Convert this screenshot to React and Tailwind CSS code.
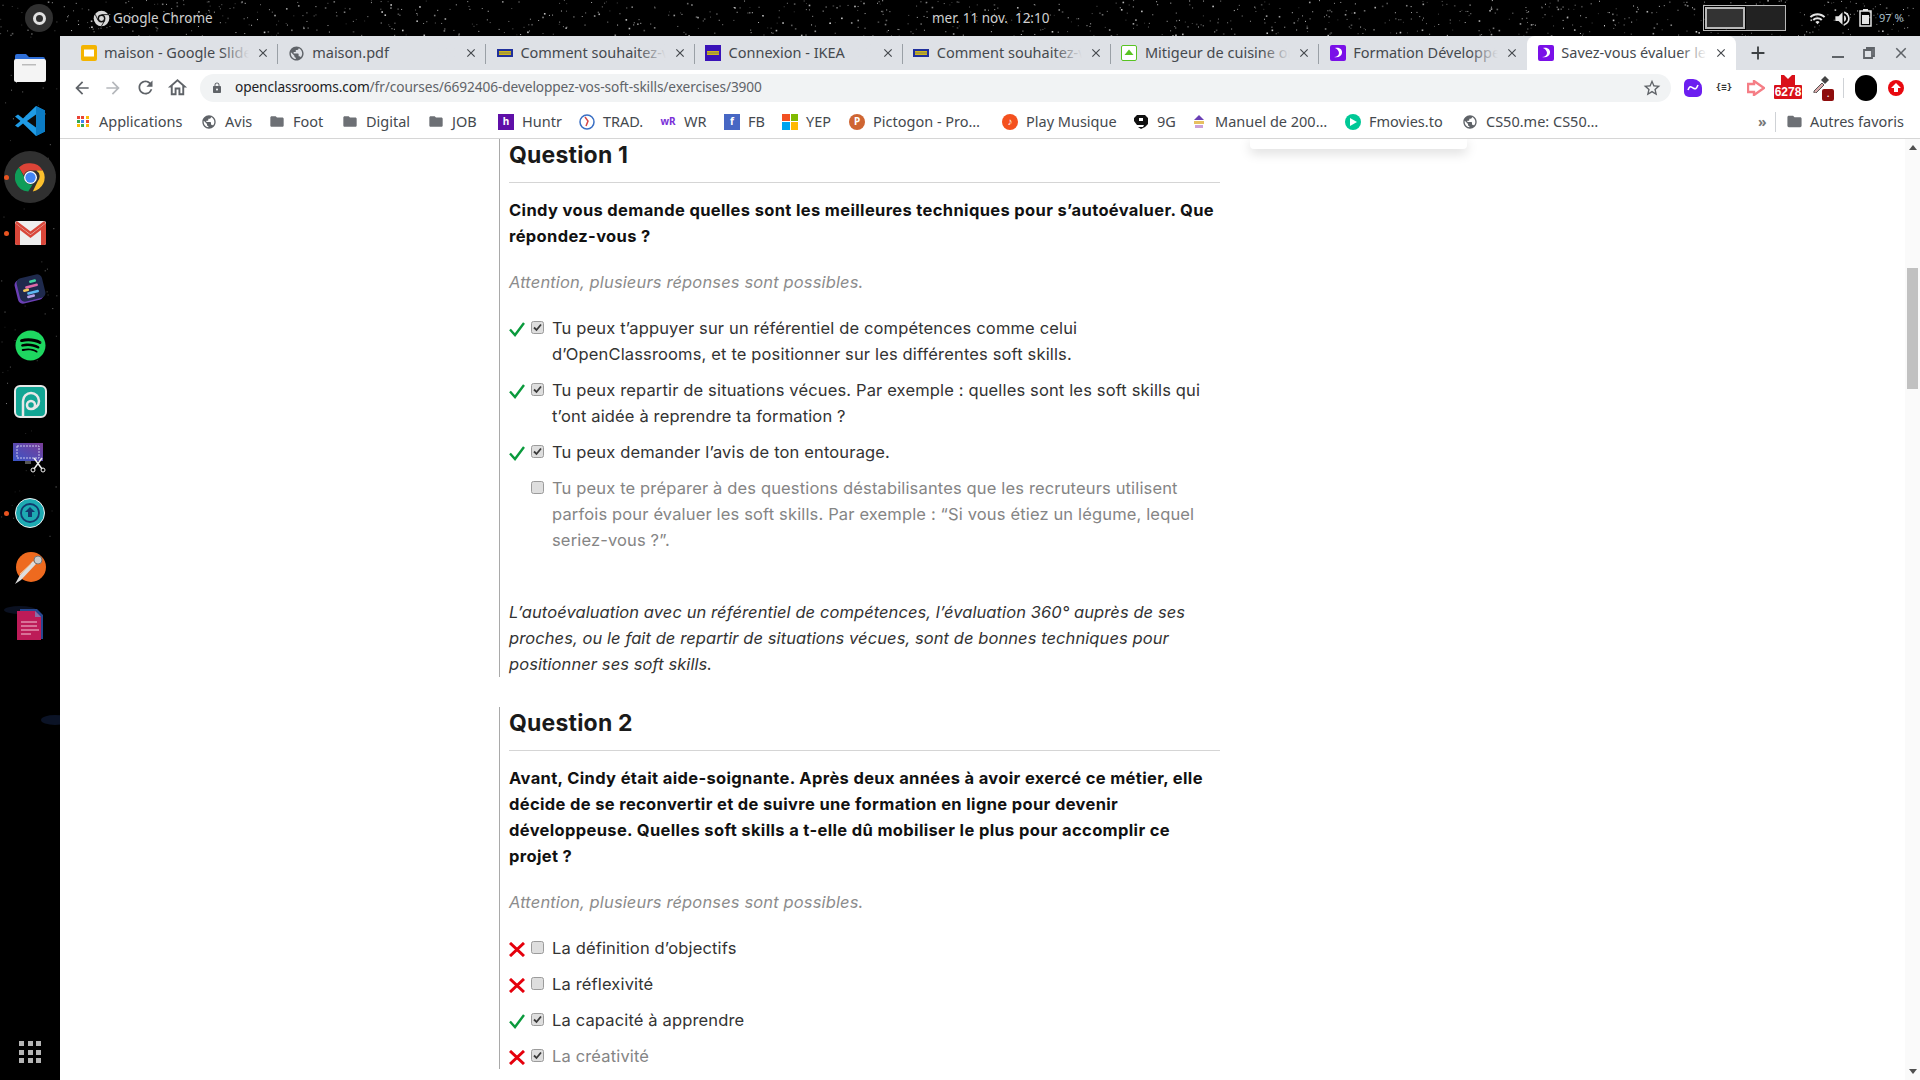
import * as React from 'react';
import { MdArrowBack, MdArrowForward, MdRefresh, MdOutlineHome, MdLock, MdStarBorder, MdFolder, MdPublic, MdClose, MdAdd, MdWifi, MdVolumeUp } from 'react-icons/md';
import { FaSpotify } from 'react-icons/fa';

const UI_FONT = "font-['Noto_Sans',sans-serif]";
const PAGE_FONT = "font-['Inter',sans-serif]";

// wallpaper specks, denser along the top
const makeStars = () => {
  let seed = 7;
  const rand = () => {
    seed = (seed * 16807) % 2147483647;
    return seed / 2147483647;
  };
  const stars = [];
  for (let i = 0; i < 900; i++) {
    stars.push({ x: rand() * 1920, y: rand() * 36, o: 0.2 + rand() * 0.6, s: rand() > 0.8 ? 1.6 : 1 });
  }
  for (let i = 0; i < 70; i++) {
    stars.push({ x: rand() * 60, y: 36 + rand() * 500, o: 0.1 + rand() * 0.4, s: 1 });
  }
  return stars;
};

const Wallpaper = () => (
  <svg className="absolute inset-0 w-full h-full" viewBox="0 0 1920 1080">
    {makeStars().map((s, i) => (
      <rect key={i} x={s.x} y={s.y} width={s.s} height={s.s} fill="#fff" opacity={s.o} />
    ))}
    <ellipse cx="55" cy="720" rx="14" ry="5" fill="#13203f" opacity="0.6" />
    <ellipse cx="20" cy="610" rx="16" ry="4" fill="#101b35" opacity="0.6" />
  </svg>
);

const ChromeLogo = ({ size = 16, center = '#4285f4' }) => (
  <svg width={size} height={size} viewBox="0 0 48 48">
    <path d="M24 2a22 22 0 0 1 19 11H24a11 11 0 0 0-10.500 7.500L6 8.500A22 22 0 0 1 24 2z" fill="#db4437" />
    <path d="M43 13a22 22 0 0 1-15.500 32.700L35 30a11 11 0 0 0-2-17z" fill="#fbc02d" />
    <path d="M6 8.500L14 23a11 11 0 0 0 13.500 11.500l-7 11.200A22 22 0 0 1 6 8.500z" fill="#0f9d58" />
    <circle cx="24" cy="24" r="10" fill="#fff" />
    <circle cx="24" cy="24" r="8" fill={center} />
  </svg>
);

const MonoChrome = () => (
  <svg width="17" height="17" viewBox="0 0 48 48">
    <circle cx="24" cy="24" r="22" fill="#d8d8d8" />
    <circle cx="24" cy="24" r="11" fill="#111" />
    <circle cx="24" cy="24" r="7" fill="#d8d8d8" />
    <path d="M24 13h19M14.500 29.500L6 12M33 30l-9 15" stroke="#111" strokeWidth="2.500" />
  </svg>
);

const FilesIcon = () => (
  <svg width="34" height="34" viewBox="0 0 34 34">
    <path d="M2 6a2 2 0 0 1 2-2h9l3 3h14a2 2 0 0 1 2 2v6H2z" fill="#2f6fd8" />
    <rect x="1" y="9" width="32" height="23" rx="2" fill="#f4f4f4" />
    <rect x="9" y="14" width="14" height="1.500" fill="#bbb" />
  </svg>
);

const VscodeIcon = () => (
  <svg width="32" height="32" viewBox="0 0 32 32">
    <path d="M22 1l9 4.500v21L22 31 9 18.500l-5 4-3-2L6.500 16 1 11.500l3-2 5 4z" fill="#1f9be6" />
    <path d="M22 1l9 4.500v21L22 31z" fill="#0b7bc4" />
    <path d="M22 9.500v13L13 16z" fill="#0c0c0c" />
  </svg>
);

const GmailIcon = () => (
  <svg width="31" height="24" viewBox="0 0 31 24">
    <rect width="31" height="24" rx="2" fill="#eeeeee" />
    <path d="M0 2l15.500 12L31 2v20a2 2 0 0 1-2 2h-3V9L15.500 17 5 9v15H2a2 2 0 0 1-2-2z" fill="#d9473a" />
    <path d="M1 1l14.500 11L30 1" fill="none" stroke="#d9473a" strokeWidth="2.500" />
  </svg>
);

const SlackLikeIcon = () => (
  <svg width="32" height="32" viewBox="0 0 32 32">
    <rect x="2" y="5" width="26" height="24" rx="5" fill="#6b3fb5" transform="rotate(-14 15 17)" />
    <rect x="4" y="3" width="26" height="24" rx="5" fill="#1f2a4d" transform="rotate(-14 17 15)" />
    <rect x="15" y="7" width="7" height="2.500" rx="1" fill="#41d8a0" transform="rotate(-14 18 8)" />
    <rect x="11" y="12" width="13" height="2.500" rx="1" fill="#e06aa8" transform="rotate(-14 17 13)" />
    <rect x="9" y="16" width="6" height="2.500" rx="1" fill="#f2c95c" transform="rotate(-14 12 17)" />
    <rect x="13" y="18" width="12" height="2.500" rx="1" fill="#5cb8f2" transform="rotate(-14 19 19)" />
    <rect x="13" y="22" width="8" height="2.500" rx="1" fill="#b8a0e8" transform="rotate(-14 17 23)" />
  </svg>
);

const PixelIcon = () => (
  <svg width="33" height="33" viewBox="0 0 33 33">
    <rect x="1" y="1" width="31" height="31" rx="5" fill="#12a594" stroke="#e8e8e8" strokeWidth="2" />
    <path d="M9 31V16a8 8 0 1 1 8 8c-3 0-4-2-4-4a4 4 0 1 1 4 4" fill="none" stroke="#e8e8e8" strokeWidth="2.500" />
  </svg>
);

const ScreenshotIcon = () => (
  <svg width="36" height="32" viewBox="0 0 36 32">
    <defs>
      <linearGradient id="shot" x1="0" y1="1" x2="1" y2="0">
        <stop offset="0" stopColor="#3a56c8" />
        <stop offset="1" stopColor="#7a3d96" />
      </linearGradient>
    </defs>
    <rect x="1" y="2" width="30" height="18" fill="url(#shot)" />
    <rect x="5" y="5" width="22" height="12" fill="none" stroke="#c9c9ee" strokeDasharray="2 1" />
    <rect x="13" y="20" width="6" height="3" fill="#555" />
    <path d="M22 17l8 11M30 17l-8 11" stroke="#eee" strokeWidth="1.500" />
    <circle cx="21" cy="29" r="2" fill="none" stroke="#eee" />
    <circle cx="31" cy="29" r="2" fill="none" stroke="#eee" />
  </svg>
);

const UploadCircleIcon = () => (
  <svg width="30" height="30" viewBox="0 0 30 30">
    <circle cx="15" cy="15" r="14.500" fill="#1eaab2" stroke="#f0f0f0" />
    <circle cx="15" cy="15" r="9" fill="none" stroke="#123a6e" strokeWidth="1.800" />
    <path d="M15 9l5 5h-3v5h-4v-5h-3z" fill="#123a6e" />
  </svg>
);

const PenIcon = () => (
  <svg width="32" height="34" viewBox="0 0 32 34">
    <circle cx="17" cy="15" r="15" fill="#ee6a1f" />
    <path d="M1 32l6-4 15-16-3-3L6 23z" fill="#ddd" />
    <path d="M6 22l11-10" stroke="#f5c89a" />
    <circle cx="24" cy="8" r="4" fill="#ccc" stroke="#777" />
  </svg>
);

const DocIcon = () => (
  <svg width="28" height="32" viewBox="0 0 28 32">
    <path d="M4 0h17l6 6v24H4z" fill="#27478f" />
    <path d="M1 2h18l6 6v23H1z" fill="#bd1b58" />
    <path d="M19 2l6 6h-6z" fill="#8a6fa8" />
    <path d="M5 13h16M5 17h16M5 21h18M5 25h10" stroke="#f3c7d6" strokeWidth="1.200" />
  </svg>
);

const Dock = () => {
  const slotClass = 'flex items-center justify-center relative h-[56px] w-full shrink-0';
  const dotClass = 'absolute left-[4px] top-[26px] w-[5px] h-[5px] rounded-full bg-[#e95420]';
  return (
    <div className="relative w-[60px] shrink-0 flex flex-col items-center pt-[3px] pb-[17px]">
      <div className={slotClass}><FilesIcon /></div>
      <div className={`${slotClass} mt-[-2px]`}><VscodeIcon /></div>
      <div className={slotClass}>
        <span className="w-[52px] h-[52px] rounded-full bg-[#303030] flex items-center justify-center">
          <ChromeLogo size={31} />
        </span>
        <span className={dotClass} />
      </div>
      <div className={slotClass}>
        <GmailIcon />
        <span className={dotClass} />
      </div>
      <div className={slotClass}><SlackLikeIcon /></div>
      <div className={slotClass}><FaSpotify size={31} color="#1ed760" /></div>
      <div className={slotClass}><PixelIcon /></div>
      <div className={slotClass}><ScreenshotIcon /></div>
      <div className={slotClass}>
        <UploadCircleIcon />
        <span className={dotClass} />
      </div>
      <div className={slotClass}><PenIcon /></div>
      <div className={slotClass}><DocIcon /></div>
      <div className="mt-auto grid grid-cols-3 gap-[3.500px]">
        {[...Array(9)].map((_, i) => (
          <span key={i} className="w-[5px] h-[5px] bg-[#b5b5b5]" />
        ))}
      </div>
    </div>
  );
};

const TopBar = () => (
  <div className={`relative h-[36px] shrink-0 flex items-center text-[13.500px] text-[#d0d0d0] ${UI_FONT}`}>
    <div className="ml-[25px] w-[28px] h-[28px] rounded-full bg-[#303030] flex items-center justify-center">
      <span className="w-[13px] h-[13px] rounded-full border-[3px] border-[#e0e0e0]" />
    </div>
    <div className="ml-[40px] flex items-center gap-[3px] w-[130px]">
      <MonoChrome />
      <span>Google Chrome</span>
    </div>
    <span className="ml-[709px] w-[116px] text-center whitespace-nowrap">mer. 11 nov.&nbsp; 12:10</span>
    <div className="ml-[655px] w-[83px] h-[26px] border border-[#b8b8b8] flex">
      <span className="w-[40px] m-[1px] bg-[#333] border-2 border-[#b8b8b8]" />
      <span className="flex-1 bg-[#222]" />
    </div>
    <MdWifi className="ml-[23px] text-[#e4e4e4]" size={17} />
    <MdVolumeUp className="ml-[7px] text-[#e4e4e4]" size={19} />
    <svg className="ml-[7px]" width="13" height="18" viewBox="0 0 13 18">
      <rect x="4" y="0" width="5" height="2" fill="#e4e4e4" />
      <rect x="1" y="2" width="11" height="15" fill="none" stroke="#e4e4e4" strokeWidth="1.500" />
      <rect x="3" y="6" width="7" height="9" fill="#e4e4e4" />
    </svg>
    <span className="ml-[7px] text-[11px] text-[#a9bfc9]">97 %</span>
  </div>
);

const SlidesFav = () => (
  <svg width="16" height="16" viewBox="0 0 16 16">
    <rect width="16" height="16" rx="2" fill="#f4b400" />
    <rect x="3" y="4.500" width="10" height="7" fill="#fff" />
  </svg>
);

const IkeaFav = ({ tall }) => (
  <svg width="16" height="16" viewBox="0 0 16 16">
    {tall ? (
      <rect width="16" height="16" fill="#3a13b8" />
    ) : (
      <rect y="4" width="16" height="8" fill="#20309c" />
    )}
    <rect x="2" y="6" width="12" height="4" fill="#f5d400" />
    <path d="M3 6.500v3M5 6.500v3M7 6.500v3M9 6.500v3M11 6.500v3M13 6.500v3" stroke="#20309c" strokeWidth="0.700" />
  </svg>
);

const MitigeurFav = () => (
  <svg width="16" height="16" viewBox="0 0 16 16">
    <rect x="0.500" y="0.500" width="15" height="15" rx="1.500" fill="#fff" stroke="#58c322" />
    <path d="M8 4.500l4.500 5.500h-9z" fill="#58c322" />
  </svg>
);

const OcFav = () => (
  <svg width="16" height="16" viewBox="0 0 16 16">
    <rect width="16" height="16" rx="2" fill="#7a10e8" />
    <path d="M5 3c5-1 7.500 2 7 5s-3.500 5-8 4c3 0 5-2 5-4S7 3.500 5 3z" fill="#fff" />
  </svg>
);

const TABS = [
  { title: 'maison - Google Slides', icon: <SlidesFav /> },
  { title: 'maison.pdf', icon: <MdPublic size={17} className="text-[#5f6368]" /> },
  { title: 'Comment souhaitez-vous', icon: <IkeaFav /> },
  { title: 'Connexion - IKEA', icon: <IkeaFav tall /> },
  { title: 'Comment souhaitez-vous', icon: <IkeaFav /> },
  { title: 'Mitigeur de cuisine orange', icon: <MitigeurFav /> },
  { title: 'Formation Développeur', icon: <OcFav /> },
  { title: 'Savez-vous évaluer les soft', icon: <OcFav />, active: true },
];

const Tab = ({ title, icon, active, showSep }) => (
  <div className={`relative w-[208.200px] shrink-0 h-[34px] flex items-center pl-[10px] pr-[8px] ${active ? 'bg-white rounded-t-[8px]' : ''}`}>
    <span className="w-[17px] flex justify-center shrink-0">{icon}</span>
    <div className="relative ml-[7px] flex-1 overflow-hidden whitespace-nowrap text-[#45494e]">
      {title}
      <span className={`absolute right-0 top-0 bottom-0 w-[28px] bg-gradient-to-r from-transparent ${active ? 'to-white' : 'to-[#dee1e6]'}`} />
    </div>
    <MdClose size={14} className="ml-[7px] shrink-0 text-[#45494e]" />
    {showSep && <span className="absolute right-0 top-[8px] w-px h-[20px] bg-[#9aa0a6]" />}
  </div>
);

const TabStrip = () => (
  <div className={`h-[34px] shrink-0 bg-[#dee1e6] flex items-end pl-[10px] text-[14.500px] ${UI_FONT}`}>
    {TABS.map((t, i) => (
      <Tab key={i} {...t} showSep={i < 6} />
    ))}
    <MdAdd size={22} className="ml-[11px] mb-[6px] text-[#3c4043]" />
    <div className="ml-auto h-full flex items-center text-[#45494e]">
      <span className="w-[12px] h-[2px] bg-[#5f6368] mt-[8px]" />
      <svg className="ml-[19px]" width="12" height="12" viewBox="0 0 12 12">
        <path d="M3 1h8v8H9M1 3h8v8H1z" fill="none" stroke="#5f6368" strokeWidth="1.800" />
      </svg>
      <MdClose size={18} className="ml-[17px] mr-[10px] text-[#5f6368]" />
    </div>
  </div>
);

const ExtIcons = () => (
  <div className="flex items-center ml-[10px]">
    <span className="w-[18px] h-[18px] rounded-[5px] rounded-tr-[9px] bg-[#6c1ff0] flex items-center justify-center mx-[3px]">
      <svg width="12" height="10" viewBox="0 0 12 10">
        <path d="M1 7c2-5 3-3 5-2s3 2 5-3" fill="none" stroke="#fff" strokeWidth="1.600" />
      </svg>
    </span>
    <span className="w-[18px] text-center text-[9px] font-bold text-[#333] ml-[10px] font-['DejaVu_Sans_Mono',monospace]">{'{≡}'}</span>
    <svg className="ml-[14px]" width="18" height="16" viewBox="0 0 18 16">
      <path d="M1 4h6V1l10 7-10 7v-3H1z" fill="none" stroke="#f57e86" strokeWidth="2.400" />
    </svg>
    <div className="relative ml-[9px] w-[28px] h-[25px] flex flex-col items-center">
      <svg width="14" height="10" viewBox="0 0 14 10">
        <path d="M0 0h3l4 4 4-4h3v10H0z" fill="#d9111a" />
      </svg>
      <span className="w-[28px] h-[14px] bg-[#d9111a] rounded-[1px] text-white text-[12px] font-bold leading-[14px] text-center font-['Liberation_Sans',sans-serif]">6278</span>
    </div>
    <div className="relative ml-[10px] w-[22px] h-[26px]">
      <svg width="18" height="18" viewBox="0 0 18 18">
        <path d="M2 16l8-8 2 2-8 8H2z" fill="#d9a8a8" stroke="#555" />
        <path d="M9 5l4-4 4 4-4 4z" fill="#444" />
      </svg>
      <span className="absolute right-0 bottom-0 w-[12px] h-[12px] bg-[#8e0d0d] rounded-[2px] text-white text-[8px] leading-[10px] text-center font-bold">.</span>
    </div>
    <span className="ml-[9px] w-px h-[20px] bg-[#cfd2d6]" />
    <span className="ml-[11px] w-[22px] h-[26px] rounded-full bg-black" />
    <span className="ml-[11px] w-[16px] h-[16px] rounded-full bg-[#e8090f] flex items-center justify-center">
      <svg width="10" height="10" viewBox="0 0 10 10">
        <path d="M5 0l5 5H7v4H3V5H0z" fill="#fff" />
      </svg>
    </span>
  </div>
);

const Toolbar = () => (
  <div className={`h-[35px] shrink-0 bg-white flex items-center text-[14px] ${UI_FONT}`}>
    <MdArrowBack size={20} className="ml-[12px] text-[#5f6368]" />
    <MdArrowForward size={20} className="ml-[11px] text-[#b5b8bc]" />
    <MdRefresh size={21} className="ml-[12px] text-[#5f6368]" />
    <MdOutlineHome size={23} className="ml-[10px] text-[#5f6368]" />
    <div className="ml-[11px] w-[1471px] h-[28px] rounded-full bg-[#f1f3f4] flex items-center">
      <MdLock size={12} className="ml-[11px] text-[#5f6368]" />
      <span className="ml-[12px] text-[13.700px] tracking-[-0.1px] text-[#5f6368] whitespace-nowrap">
        <span className="text-[#202124]">openclassrooms.com</span>/fr/courses/6692406-developpez-vos-soft-skills/exercises/3900
      </span>
      <MdStarBorder size={20} className="ml-auto mr-[9px] text-[#5f6368]" />
    </div>
    <ExtIcons />
  </div>
);

const GlobeBm = () => <MdPublic size={16} className="text-[#5f6368]" />;
const FolderBm = () => <MdFolder size={17} className="text-[#6d7075]" />;

const AppsBm = () => (
  <div className="grid grid-cols-3 gap-[1px] w-[13px]">
    {['#ea4335', '#ea4335', '#fbbc05', '#34a853', '#4285f4', '#ea4335', '#fbbc05', '#34a853', '#fbbc05'].map((c, i) => (
      <span key={i} className="w-[3px] h-[3px]" style={{ background: c }} />
    ))}
  </div>
);

const BadgeBm = ({ bg, text, round, color = '#fff' }) => (
  <span
    className={`w-[16px] h-[16px] flex items-center justify-center text-[10px] font-bold ${round ? 'rounded-full' : ''}`}
    style={{ background: bg, color }}
  >
    {text}
  </span>
);

const TradBm = () => (
  <svg width="16" height="16" viewBox="0 0 16 16">
    <circle cx="8" cy="8" r="7" fill="#fff" stroke="#3a6fc4" strokeWidth="1.500" />
    <path d="M6 3l3 4-2 5" fill="none" stroke="#d64545" strokeWidth="1.500" />
  </svg>
);

const WinBm = () => (
  <div className="grid grid-cols-2 gap-[1px] w-[16px]">
    {['#f25022', '#7fba00', '#00a4ef', '#ffb900'].map((c) => (
      <span key={c} className="w-[7.500px] h-[7.500px]" style={{ background: c }} />
    ))}
  </div>
);

const NineBm = () => (
  <svg width="16" height="16" viewBox="0 0 16 16">
    <path d="M4 1h8l3 3v6l-3 3-4 2-3-2h5l1-2H4L1 7V4z" fill="#111" />
    <rect x="6" y="4" width="4" height="3" fill="#fff" />
  </svg>
);

const ManuelBm = () => (
  <svg width="14" height="16" viewBox="0 0 14 16">
    <path d="M7 1l5 5H2z" fill="#6a3fb5" />
    <rect x="2" y="7" width="10" height="3" fill="#e8c060" />
    <rect x="3" y="11" width="8" height="3" fill="#caa0d8" />
  </svg>
);

const PlayBm = () => (
  <span className="w-[16px] h-[16px] rounded-full bg-[#00c896] flex items-center justify-center">
    <svg width="8" height="8" viewBox="0 0 8 8"><path d="M1 0l7 4-7 4z" fill="#fff" /></svg>
  </span>
);

const BOOKMARKS = [
  { w: 'w-[126px]', label: 'Applications', icon: <AppsBm /> },
  { w: 'w-[68px]', label: 'Avis', icon: <GlobeBm /> },
  { w: 'w-[73px]', label: 'Foot', icon: <FolderBm /> },
  { w: 'w-[86px]', label: 'Digital', icon: <FolderBm /> },
  { w: 'w-[70px]', label: 'JOB', icon: <FolderBm /> },
  { w: 'w-[81px]', label: 'Huntr', icon: <BadgeBm bg="#5f0fa8" text="h" /> },
  { w: 'w-[81px]', label: 'TRAD.', icon: <TradBm /> },
  { w: 'w-[64px]', label: 'WR', icon: <span className="text-[10px] font-bold text-[#7a2fd8] w-[16px] text-center">wR</span> },
  { w: 'w-[58px]', label: 'FB', icon: <BadgeBm bg="#4767c4" text="f" /> },
  { w: 'w-[67px]', label: 'YEP', icon: <WinBm /> },
  { w: 'w-[153px]', label: 'Pictogon - Pro…', icon: <BadgeBm bg="#cf6532" text="P" round /> },
  { w: 'w-[131px]', label: 'Play Musique', icon: <BadgeBm bg="#f4511e" text="♪" round /> },
  { w: 'w-[58px]', label: '9G', icon: <NineBm /> },
  { w: 'w-[154px]', label: 'Manuel de 200…', icon: <ManuelBm /> },
  { w: 'w-[117px]', label: 'Fmovies.to', icon: <PlayBm /> },
  { w: 'w-[296px]', label: 'CS50.me: CS50…', icon: <GlobeBm /> },
];

const BookmarksBar = () => (
  <div className={`h-[34px] shrink-0 bg-white border-b border-[#d6d6d6] flex items-center pl-[15px] text-[14.500px] text-[#45494e] ${UI_FONT}`}>
    {BOOKMARKS.map((b) => (
      <div key={b.label} className={`${b.w} shrink-0 flex items-center whitespace-nowrap`}>
        <span className="w-[16px] flex justify-center shrink-0">{b.icon}</span>
        <span className="ml-[8px]">{b.label}</span>
      </div>
    ))}
    <span className="text-[14px] font-bold text-[#777] w-[17px]">»</span>
    <span className="w-px h-[20px] bg-[#cfd2d6]" />
    <span className="ml-[10px] flex items-center gap-[7px] whitespace-nowrap">
      <FolderBm />
      Autres favoris
    </span>
  </div>
);

const GoodIcon = () => (
  <svg width="16" height="15" viewBox="0 0 16 15">
    <path d="M1 7.500l5 5.500 9-12" fill="none" stroke="#0a9a3c" strokeWidth="2.400" />
  </svg>
);

const BadIcon = () => (
  <svg width="16" height="15" viewBox="0 0 16 15">
    <path d="M1 1l14 13M15 1L1 14" fill="none" stroke="#e5000c" strokeWidth="3" />
  </svg>
);

const FakeCheckbox = ({ checked }) => (
  <span className="ml-[6px] mt-[6px] w-[13px] h-[13px] shrink-0 rounded-[2.500px] bg-[#dedede] border border-[#9b9b9b] flex items-center justify-center">
    {checked && (
      <svg width="9" height="9" viewBox="0 0 9 9">
        <path d="M1 4.500l2.500 2.500L8 1.500" fill="none" stroke="#3a3a3a" strokeWidth="1.800" />
      </svg>
    )}
  </span>
);

const Option = ({ mark, checked, muted, children }) => (
  <div className={`flex items-start tracking-[0.15px] ${muted ? 'text-[#858585]' : 'text-[#333]'}`}>
    <span className="w-[16px] h-[15px] mt-[7px] shrink-0">
      {mark === 'good' && <GoodIcon />}
      {mark === 'bad' && <BadIcon />}
    </span>
    <FakeCheckbox checked={checked} />
    <span className="ml-[8px]">{children}</span>
  </div>
);

const Question = ({ title, prompt, children, explanation }) => (
  <section className="w-[721px] border-l border-[#a9a9a9] pl-[9px]">
    <h2 className="pt-[1px] text-[23px] leading-[30px] font-bold text-[#1a1a1a] tracking-[0.2px]">{title}</h2>
    <div className="mt-[12px] h-px bg-[#d5d5d5] w-[711px]" />
    <p className="mt-[14px] font-bold text-[#111] tracking-[0.35px]">{prompt}</p>
    <p className="mt-[20px] italic text-[#8c8c8c] tracking-[0.14px]">Attention, plusieurs réponses sont possibles.</p>
    <div className="mt-[20px] flex flex-col gap-[10px]">{children}</div>
    {explanation && <p className="mt-[46px] italic text-[#333] tracking-[0.08px]">{explanation}</p>}
  </section>
);

const Scrollbar = () => (
  <div className="w-[15px] shrink-0 bg-[#fafafa] flex flex-col items-center justify-between relative">
    <span className="mt-[6px] w-0 h-0 border-x-[4px] border-x-transparent border-b-[5px] border-b-[#505050]" />
    <span className="absolute left-[2px] top-[129px] w-[11px] h-[121px] bg-[#c1c1c1]" />
    <span className="mb-[6px] w-0 h-0 border-x-[4px] border-x-transparent border-t-[5px] border-t-[#505050]" />
  </div>
);

const Page = () => (
  <div className={`relative flex-1 min-h-0 bg-white flex overflow-hidden text-[16.500px] leading-[26px] ${PAGE_FONT}`}>
    <div className="flex-1 pl-[439px] flex flex-col gap-[30px]">
      <Question
        title="Question 1"
        prompt={<>Cindy vous demande quelles sont les meilleures techniques pour s’autoévaluer. Que<br />répondez-vous ?</>}
        explanation={<>L’autoévaluation avec un référentiel de compétences, l’évaluation 360° auprès de ses<br />proches, ou le fait de repartir de situations vécues, sont de bonnes techniques pour<br />positionner ses soft skills.</>}
      >
        <Option mark="good" checked>Tu peux t’appuyer sur un référentiel de compétences comme celui<br />d’OpenClassrooms, et te positionner sur les différentes soft skills.</Option>
        <Option mark="good" checked>Tu peux repartir de situations vécues. Par exemple : quelles sont les soft skills qui<br />t’ont aidée à reprendre ta formation ?</Option>
        <Option mark="good" checked>Tu peux demander l’avis de ton entourage.</Option>
        <Option muted checked={false}>Tu peux te préparer à des questions déstabilisantes que les recruteurs utilisent<br />parfois pour évaluer les soft skills. Par exemple : “Si vous étiez un légume, lequel<br />seriez-vous ?”.</Option>
      </Question>
      <Question
        title="Question 2"
        prompt={<>Avant, Cindy était aide-soignante. Après deux années à avoir exercé ce métier, elle<br />décide de se reconvertir et de suivre une formation en ligne pour devenir<br />développeuse. Quelles soft skills a t-elle dû mobiliser le plus pour accomplir ce<br />projet ?</>}
      >
        <Option mark="bad" checked={false}>La définition d’objectifs</Option>
        <Option mark="bad" checked={false}>La réflexivité</Option>
        <Option mark="good" checked>La capacité à apprendre</Option>
        <Option mark="bad" checked muted>La créativité</Option>
      </Question>
    </div>
    <div className="absolute left-[1190px] top-0 w-[217px] h-[10px] bg-white rounded-b-[4px] shadow-[0_4px_12px_rgba(0,0,0,0.15)]" />
    <Scrollbar />
  </div>
);

export default function App() {
  return (
    <div className="relative w-[1920px] h-[1080px] bg-black overflow-hidden flex flex-col">
      <Wallpaper />
      <TopBar />
      <div className="relative flex-1 min-h-0 flex">
        <Dock />
        <div className="flex-1 min-w-0 flex flex-col">
          <TabStrip />
          <Toolbar />
          <BookmarksBar />
          <Page />
        </div>
      </div>
    </div>
  );
}
